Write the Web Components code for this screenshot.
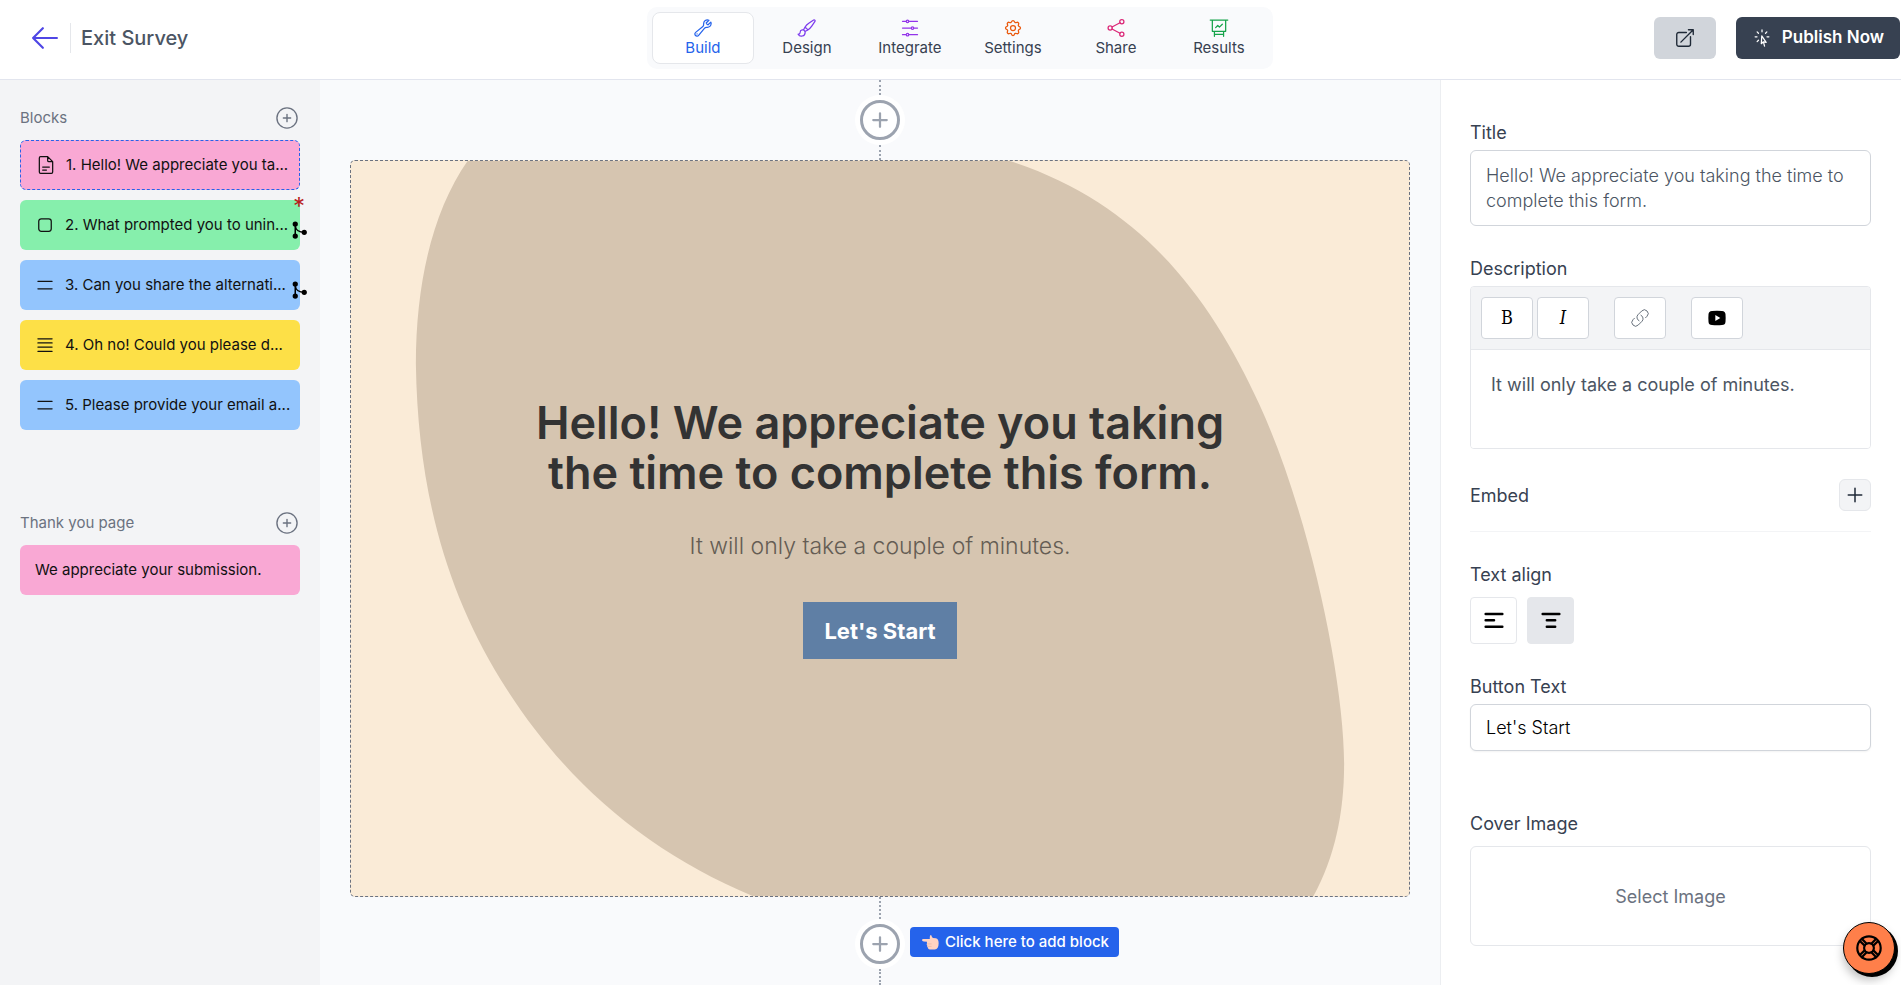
<!DOCTYPE html>
<html lang="en">
<head>
<meta charset="utf-8">
<meta name="viewport" content="width=device-width, initial-scale=1">
<title>Exit Survey</title>
<style>
  body {
    margin: 0;
    font-family: Inter, "Liberation Sans", sans-serif;
    color: #374151;
    background: #f9fafb;
  }
</style>
</head>
<body>
<survey-app></survey-app>

<script>
const icons = {
  back: `<path d="M23 10H1M10 1L1 10l9 9"/>`,
  wrench: `<path d="M21.75 6.75a4.5 4.5 0 0 1-4.884 4.484c-1.076-.091-2.264.071-2.95.904l-7.152 8.684a2.548 2.548 0 1 1-3.586-3.586l8.684-7.152c.833-.686.995-1.874.904-2.95a4.5 4.5 0 0 1 6.336-4.486l-3.276 3.276a3.004 3.004 0 0 0 2.25 2.25l3.276-3.276c.256.565.398 1.192.398 1.852Z"/><path d="M4.867 19.125h.008v.008h-.008v-.008Z"/>`,
  brush: `<path d="M9.53 16.122a3 3 0 0 0-5.78 1.128 2.25 2.25 0 0 1-2.4 2.245 4.5 4.5 0 0 0 8.4-2.245c0-.399-.078-.78-.22-1.128Zm0 0a15.998 15.998 0 0 0 3.388-1.62m-5.043-.025a15.994 15.994 0 0 1 1.622-3.395m3.42 3.42a15.995 15.995 0 0 0 4.764-4.648l3.876-5.814a1.151 1.151 0 0 0-1.597-1.597L14.146 6.32a15.996 15.996 0 0 0-4.649 4.763m3.42 3.42a6.776 6.776 0 0 0-3.42-3.42"/>`,
  sliders: `<path d="M10.5 4H21M10.5 4a1.5 1.5 0 1 1-3 0m3 0a1.5 1.5 0 1 0-3 0M3 4h4.5m3 16H21m-10.5 0a1.5 1.5 0 0 1-3 0m3 0a1.5 1.5 0 0 0-3 0M3 20h4.5m9-8H21m-4.5 0a1.5 1.5 0 0 1-3 0m3 0a1.5 1.5 0 0 0-3 0M3 12h10.5"/>`,
  cog: `<path d="M10.325 4.317c.426-1.756 2.924-1.756 3.35 0a1.724 1.724 0 002.573 1.066c1.543-.94 3.31.826 2.37 2.37a1.724 1.724 0 001.065 2.572c1.756.426 1.756 2.924 0 3.35a1.724 1.724 0 00-1.066 2.573c.94 1.543-.826 3.31-2.37 2.37a1.724 1.724 0 00-2.572 1.065c-.426 1.756-2.924 1.756-3.35 0a1.724 1.724 0 00-2.573-1.066c-1.543.94-3.31-.826-2.37-2.37a1.724 1.724 0 00-1.065-2.572c-1.756-.426-1.756-2.924 0-3.35a1.724 1.724 0 001.066-2.573c-.94-1.543.826-3.31 2.37-2.37.996.608 2.296.07 2.572-1.065z"/><circle cx="12" cy="12" r="3"/>`,
  share: `<circle cx="5" cy="12" r="2.5"/><circle cx="19" cy="4.5" r="2.5"/><circle cx="19" cy="19.5" r="2.5"/><path d="M7.2 10.8l9.6-5.1M7.2 13.2l9.6 5.1"/>`,
  chart: `<path d="M1.5 2.5h21M4 2.5V16h16V2.5M6.5 16v6M17.5 16v6M6.500 19.500h11M8 11.500l2.500-2.500 2 2L16 7.500"/>`,
  external: `<path d="M13.5 6H5.25A2.25 2.25 0 0 0 3 8.25v10.5A2.25 2.25 0 0 0 5.25 21h10.5A2.25 2.25 0 0 0 18 18.75V10.5m-10.5 6L21 3m0 0h-5.25M21 3v5.25"/>`,
  click: `<path d="M15.042 21.672 13.684 16.6m0 0-2.51 2.225.569-9.47 5.227 7.917-3.286-.672ZM12 2.25V4.5m5.834.166-1.591 1.591M20.25 10.5H18M7.757 14.743l-1.59 1.59M6 10.5H3.75m4.007-4.243-1.59-1.59"/>`,
  addCircle: `<circle cx="12" cy="12" r="11"/><path d="M12 8v8M8 12h8"/>`,
  plus: `<path d="M12 3v18M3 12h18"/>`,
  page: `<path d="M14 2H5.5A1.5 1.5 0 0 0 4 3.5v17A1.5 1.5 0 0 0 5.5 22h13a1.5 1.5 0 0 0 1.5-1.5V8zM14 2v4.5A1.5 1.5 0 0 0 15.5 8H20M8 14.5h8M8 18h4.5"/>`,
  box: `<rect x="4.5" y="4.5" width="15" height="15" rx="3"/>`,
  short: `<path d="M3.5 7.500h17M3.5 16.500h17"/>`,
  long: `<path d="M3.5 4.500h17M3.5 9.500h17M3.5 14.500h17M3.5 19.500h17"/>`,
  branch: `<g fill="currentColor"><circle cx="7" cy="4" r="2.5"/><circle cx="7" cy="20" r="2.5"/><circle cx="19" cy="15" r="2.500"/></g><path d="M7 4v16M7 7c1 6 6 8 12 8"/>`,
  link: `<path d="M13.19 8.688a4.5 4.5 0 0 1 1.242 7.244l-4.5 4.5a4.5 4.5 0 0 1-6.364-6.364l1.757-1.757m13.35-.622 1.757-1.757a4.5 4.5 0 0 0-6.364-6.364l-4.5 4.5a4.5 4.5 0 0 0 1.242 7.244"/>`,
  video: `<path fill="currentColor" stroke="none" fill-rule="evenodd" d="M6 3.500Q12 3 18 3.500q4 .2 4.200 4Q22.600 12 22.200 16.500q-.2 3.800-4.200 4Q12 21 6 20.500q-4-.2-4.200-4Q1.400 12 1.800 7.500 2 3.700 6 3.500zM10 8.500v7l6-3.500z"/>`,
  alignLeft: `<path d="M2 3.500h20M2 11h10M2 19h20"/>`,
  alignCenter: `<path d="M2 3.500h20M7 11h10M7 19h10"/>`,
  buoy: `<circle cx="12" cy="12" r="10.8"/><circle cx="12" cy="12" r="4.5"/><path d="M8 9.8L3.600 5.600M9.800 8L5.600 3.600M14.200 8l4.200-4.400M16 9.800l4.400-4.200M16 14.200l4.400 4.200M14.200 16l4.200 4.400M9.800 16l-4.200 4.400M8 14.200l-4.400 4.200"/>`,
  hand: `<path fill="#ffd3c2" stroke="none" d="M2.500 10.500Q0 10.200 0 8.500T2.500 7L11 7Q10.500 3.500 12 1.500q1-.6 1.400.8.4 2 2.100 3.200L19.500 6q4 .5 4 7 0 8-5.500 9H11q-2.800-.2-2.500-2.500-1.800-1-1-3-1.500-1.300-.6-3L7 11z"/><path stroke="#eab5a2" stroke-width="1" d="M8 14h5M8.500 17.500H13"/>`,
};

// <ui-icon name="..."> takes its size from --size and its line from --stroke
class UiIcon extends HTMLElement {
  connectedCallback() {
    const name = this.getAttribute("name");
    const box = name === "back" ? "0 0 24 20" : "0 0 24 24";
    this.attachShadow({ mode: "open" }).innerHTML = /*html*/ `
<style>
  :host { display: inline-flex; width: var(--size, 20px); height: var(--size, 20px); flex: none; }
  svg { width: 100%; height: 100%; fill: none; stroke: currentColor; stroke-width: var(--stroke, 1.5); stroke-linecap: round; stroke-linejoin: round; }
</style>
<svg viewBox="${box}" aria-hidden="true">${icons[name]}</svg>`;
  }
}
customElements.define("ui-icon", UiIcon);

class NavTab extends HTMLElement {
  connectedCallback() {
    this.attachShadow({ mode: "open" }).innerHTML = /*html*/ `
<style>
  :host { display: block; }
  a {
    display: flex;
    flex-direction: column;
    align-items: center;
    padding: 5px;
    border: 1px solid transparent;
    border-radius: 8px;
    color: inherit;
    font-size: 15px;
    line-height: 20px;
    text-decoration: none;
  }
  :host([active]) a { background: #fff; border-color: #e5e7eb; color: #2563eb; }
  ui-icon { color: var(--tint); }
</style>
<a href="#"><ui-icon name="${this.getAttribute("icon")}"></ui-icon><slot></slot></a>`;
  }
}
customElements.define("nav-tab", NavTab);

class AppHeader extends HTMLElement {
  connectedCallback() {
    this.attachShadow({ mode: "open" }).innerHTML = /*html*/ `
<style>
  :host {
    display: flex;
    align-items: center;
    justify-content: space-between;
    box-sizing: border-box;
    height: 80px;
    padding: 0 1px 4px 0;
    background: #fff;
    border-bottom: 1px solid #e2e5ee;
  }
  .title { display: flex; align-items: center; box-sizing: border-box; width: 266px; padding-left: 32px; }
  .title a { display: flex; color: #4f46e5; --size: 26px; --stroke: 2; }
  h1 {
    margin: 0 0 0 12px;
    padding-left: 10px;
    border-left: 1px solid #e5e7eb;
    color: #4b5563;
    font-size: 20px;
    font-weight: 500;
    line-height: 30px;
  }
  nav {
    display: grid;
    grid-template-columns: 102px repeat(5, 1fr);
    gap: 3px;
    box-sizing: border-box;
    width: 626px;
    padding: 5px 4px 5px 5px;
    border-radius: 10px;
    background: #f9fafc;
  }
  .actions { display: flex; gap: 20px; }
  button {
    display: flex;
    align-items: center;
    height: 42px;
    border: 0;
    border-radius: 6px;
    font: 600 17px/25px Inter, "Liberation Sans", sans-serif;
  }
  .preview { padding: 0 20px; background: #d1d5db; color: #1f2937; --size: 22px; }
  .publish { gap: 10px; padding: 0 16px; background: #374151; color: #fff; }
</style>
<div class="title">
  <a href="#" aria-label="Back"><ui-icon name="back"></ui-icon></a>
  <h1>Exit Survey</h1>
</div>
<nav>
  <nav-tab icon="wrench" style="--tint: #2563eb" active>Build</nav-tab>
  <nav-tab icon="brush" style="--tint: #7c3aed">Design</nav-tab>
  <nav-tab icon="sliders" style="--tint: #9333ea">Integrate</nav-tab>
  <nav-tab icon="cog" style="--tint: #ea580c">Settings</nav-tab>
  <nav-tab icon="share" style="--tint: #db2777">Share</nav-tab>
  <nav-tab icon="chart" style="--tint: #16a34a">Results</nav-tab>
</nav>
<div class="actions">
  <button class="preview" aria-label="Preview"><ui-icon name="external"></ui-icon></button>
  <button class="publish"><ui-icon name="click"></ui-icon>Publish Now</button>
</div>`;
  }
}
customElements.define("app-header", AppHeader);

class BlockItem extends HTMLElement {
  connectedCallback() {
    const icon = this.getAttribute("icon");
    this.attachShadow({ mode: "open" }).innerHTML = /*html*/ `
<style>
  :host { display: block; position: relative; color: #111; }
  button {
    display: flex;
    align-items: center;
    gap: 10px;
    width: 100%;
    height: 50px;
    padding: 0 0 0 15px;
    border: 0;
    border-radius: 6px;
    background: var(--fill);
    color: inherit;
    font: 15px/20px Inter, "Liberation Sans", sans-serif;
    white-space: nowrap;
  }
  :host([active]) button { border: 1px dashed #2563eb; }
  .required { position: absolute; top: -5px; right: -5px; color: #b91c1c; font-size: 24px; line-height: 24px; }
  .logic { position: absolute; top: 21px; right: -8px; color: #000; --size: 18px; --stroke: 2; }
</style>
<button>${icon ? `<ui-icon name="${icon}"></ui-icon>` : ""}<slot></slot></button>
${this.hasAttribute("required") ? `<span class="required">*</span>` : ""}
${this.hasAttribute("logic") ? `<ui-icon class="logic" name="branch"></ui-icon>` : ""}`;
  }
}
customElements.define("block-item", BlockItem);

class BlockGroup extends HTMLElement {
  connectedCallback() {
    this.attachShadow({ mode: "open" }).innerHTML = /*html*/ `
<style>
  :host { display: flex; flex-direction: column; gap: 10px; }
  header { display: flex; align-items: center; justify-content: space-between; height: 25px; padding-right: 2px; }
  h2 { margin: 0; color: #6b7280; font-size: 15px; font-weight: 400; line-height: 25px; }
  button { display: flex; padding: 0; border: 0; background: none; color: #6b7280; --size: 22px; }
</style>
<header>
  <h2>${this.getAttribute("heading")}</h2>
  <button aria-label="Add to ${this.getAttribute("heading")}"><ui-icon name="addCircle"></ui-icon></button>
</header>
<slot></slot>`;
  }
}
customElements.define("block-group", BlockGroup);

class BlockSidebar extends HTMLElement {
  connectedCallback() {
    this.attachShadow({ mode: "open" }).innerHTML = /*html*/ `
<style>
  :host { display: flex; flex-direction: column; gap: 80px; box-sizing: border-box; padding: 25px 20px; background: #f3f4f6; }
</style>
<block-group heading="Blocks">
  <block-item icon="page" style="--fill: #f9a8d4" active>1. Hello! We appreciate you ta...</block-item>
  <block-item icon="box" style="--fill: #86efac" required logic>2. What prompted you to unin...</block-item>
  <block-item icon="short" style="--fill: #93c5fd" logic>3. Can you share the alternati...</block-item>
  <block-item icon="long" style="--fill: #fde047">4. Oh no! Could you please d...</block-item>
  <block-item icon="short" style="--fill: #93c5fd">5. Please provide your email a...</block-item>
</block-group>
<block-group heading="Thank you page">
  <block-item style="--fill: #f9a8d4">We appreciate your submission.</block-item>
</block-group>`;
  }
}
customElements.define("block-sidebar", BlockSidebar);

// dotted line with an add button on it, the slot takes a tooltip
class AddConnector extends HTMLElement {
  connectedCallback() {
    this.attachShadow({ mode: "open" }).innerHTML = /*html*/ `
<style>
  :host { display: flex; flex-direction: column; align-items: center; }
  i { height: var(--before, 15px); border-left: 2px dotted #9ca3af; }
  i:last-child { height: var(--after, 15px); }
  div { position: relative; border-radius: 50%; background: #fff; padding: 5px; }
  button {
    display: flex;
    align-items: center;
    justify-content: center;
    box-sizing: border-box;
    width: 40px;
    height: 40px;
    padding: 0;
    border: 3px solid #9ca3af;
    border-radius: 50%;
    background: #fff;
    color: #9ca3af;
    --size: 18px;
    --stroke: 3;
  }
  ::slotted(span) {
    position: absolute;
    top: 8px;
    left: 100%;
    display: flex;
    align-items: center;
    gap: 6px;
    margin-left: 5px;
    padding: 0 10px 0 12px;
    border-radius: 4px;
    background: #2563eb;
    color: #fff;
    font-size: 15px;
    font-weight: 500;
    line-height: 30px;
    white-space: nowrap;
  }
</style>
<i></i>
<div><button aria-label="Add block"><ui-icon name="plus"></ui-icon></button><slot></slot></div>
<i></i>`;
  }
}
customElements.define("add-connector", AddConnector);

class WelcomeCard extends HTMLElement {
  connectedCallback() {
    this.attachShadow({ mode: "open" }).innerHTML = /*html*/ `
<style>
  :host {
    display: flex;
    flex-direction: column;
    align-items: center;
    justify-content: center;
    position: relative;
    overflow: hidden;
    border: 1px dashed #6b7280;
    border-radius: 5px;
    background: #faebd7;
    text-align: center;
  }
  .shape { position: absolute; inset: 0; width: 100%; height: 100%; }
  h2, p, button { position: relative; }
  h2 { max-width: 740px; margin: 0; color: #333; font-size: 45px; font-weight: 600; line-height: 50px; }
  p { margin: 30px 0 38px; color: #655d54; font-size: 23px; font-weight: 300; line-height: 36px; }
  button {
    height: 57px;
    padding: 0 21px;
    border: 0;
    background: #5f7fa5;
    color: #fff;
    font: 700 22px/32px Inter, "Liberation Sans", sans-serif;
  }
</style>
<svg class="shape" viewBox="0 0 1060 737" preserveAspectRatio="xMidYMid slice" aria-hidden="true">
  <path fill="#d6c5b0" d="M117 0C82 50 65 122 65 204C67 330 95 430 150 520C215 625 300 695 408 739H963C985 700 995 655 995 604C995 520 960 353 910 244C860 135 790 42 659 0z"/>
</svg>
<h2>Hello! We appreciate you taking the time to complete this form.</h2>
<p>It will only take a couple of minutes.</p>
<button>Let's Start</button>`;
  }
}
customElements.define("welcome-card", WelcomeCard);

class SurveyCanvas extends HTMLElement {
  connectedCallback() {
    this.attachShadow({ mode: "open" }).innerHTML = /*html*/ `
<style>
  :host { display: flex; flex-direction: column; box-sizing: border-box; padding: 0 30px; background: #f9fafc; }
  welcome-card { flex: 1; }
  .last { --before: 22px; --after: 16px; }
  .tip ui-icon { --size: 17px; }
</style>
<add-connector></add-connector>
<welcome-card></welcome-card>
<add-connector class="last"><span class="tip"><ui-icon name="hand"></ui-icon>Click here to add block</span></add-connector>`;
  }
}
customElements.define("survey-canvas", SurveyCanvas);

class BlockSettings extends HTMLElement {
  connectedCallback() {
    this.attachShadow({ mode: "open" }).innerHTML = /*html*/ `
<style>
  :host {
    display: flex;
    flex-direction: column;
    gap: 30px;
    box-sizing: border-box;
    padding: 40px 30px 40px 29px;
    border-left: 1px solid #eceef1;
    background: #fff;
    font-size: 18px;
    line-height: 25px;
  }
  .field { display: flex; flex-direction: column; gap: 5px; }
  .wide { gap: 10px; }
  .cover { margin-top: 30px; }
  input, textarea, button { box-sizing: border-box; margin: 0; border: 1px solid #d1d5db; background: #fff; font: inherit; }
  textarea { display: block; width: 100%; resize: none; overflow: hidden; color: #4b5563; font-weight: 300; outline: 0; }
  .title { height: 76px; padding: 12px 15px; border-radius: 6px; }
  input { width: 100%; height: 47px; padding: 0 15px; border-radius: 6px; color: #000; font-weight: 300; box-shadow: 0 1px 2px rgba(0, 0, 0, 0.05); }
  .editor { border: 1px solid #e5e7eb; border-radius: 4px; overflow: hidden; }
  .toolbar { display: flex; gap: 25px; padding: 10px; background: #f3f4f6; border-bottom: 1px solid #e5e7eb; }
  .toolbar div { display: flex; gap: 4px; }
  .toolbar button { width: 52px; height: 42px; border-radius: 4px; }
  .editor textarea { height: 98px; padding: 22px 20px; border: 0; font-weight: 400; }
  button { display: flex; align-items: center; justify-content: center; padding: 0; color: #000; }
  .toolbar .glyph { font: 18px/24px "DejaVu Serif Condensed", "DejaVu Serif", serif; }
  .toolbar .italic { font-style: italic; }
  .toolbar .link { color: #4b5563; --stroke: 1; }
  .embed { display: flex; align-items: center; justify-content: space-between; padding-bottom: 20px; border-bottom: 1px solid #f3f4f6; }
  .embed button { width: 32px; height: 32px; border-color: #e5e7eb; border-radius: 6px; background: #f3f4f6; color: #1f2937; --size: 18px; --stroke: 2; }
  .align { display: flex; gap: 10px; --stroke: 3; }
  .align button { width: 47px; height: 47px; border-color: #e5e7eb; border-radius: 4px; }
  .align .on { background: #e5e7eb; }
  .image { height: 100px; border-color: #e5e7eb; border-radius: 6px; color: #6b7280; }
</style>
<div class="field">
  <label for="title">Title</label>
  <textarea class="title" id="title">Hello! We appreciate you taking the time to complete this form.</textarea>
</div>
<div class="field">
  <label for="description">Description</label>
  <div class="editor">
    <div class="toolbar">
      <div>
        <button class="glyph" aria-label="Bold">B</button>
        <button class="glyph italic" aria-label="Italic">I</button>
      </div>
      <button class="link" aria-label="Link"><ui-icon name="link"></ui-icon></button>
      <button aria-label="Video"><ui-icon name="video"></ui-icon></button>
    </div>
    <textarea id="description">It will only take a couple of minutes.</textarea>
  </div>
</div>
<div class="embed">
  <span>Embed</span>
  <button aria-label="Add embed"><ui-icon name="plus"></ui-icon></button>
</div>
<div class="field wide">
  <span>Text align</span>
  <div class="align">
    <button aria-label="Left"><ui-icon name="alignLeft"></ui-icon></button>
    <button class="on" aria-label="Center"><ui-icon name="alignCenter"></ui-icon></button>
  </div>
</div>
<div class="field">
  <label for="button-text">Button Text</label>
  <input id="button-text" type="text" value="Let's Start">
</div>
<div class="field wide cover">
  <label for="cover">Cover Image</label>
  <button class="image" id="cover">Select Image</button>
</div>`;
  }
}
customElements.define("block-settings", BlockSettings);

class HelpButton extends HTMLElement {
  connectedCallback() {
    this.attachShadow({ mode: "open" }).innerHTML = /*html*/ `
<style>
  :host { position: fixed; right: 6px; bottom: 11px; }
  button {
    display: flex;
    align-items: center;
    justify-content: center;
    box-sizing: border-box;
    width: 52px;
    height: 52px;
    padding: 0;
    border: 1px solid #000;
    border-radius: 50%;
    background: #ff7f4a;
    color: #000;
    box-shadow: 3px 3px 0 #000, 0 6px 10px rgba(0, 0, 0, 0.25);
    --size: 26px;
    --stroke: 2;
  }
</style>
<button aria-label="Help"><ui-icon name="buoy"></ui-icon></button>`;
  }
}
customElements.define("help-button", HelpButton);

class SurveyApp extends HTMLElement {
  connectedCallback() {
    this.attachShadow({ mode: "open" }).innerHTML = /*html*/ `
<style>
  :host { display: flex; flex-direction: column; height: 100vh; overflow: hidden; }
  main { display: grid; grid-template-columns: 320px 1fr 461px; flex: 1; min-height: 0; }
  main > * { min-height: 0; overflow: hidden; }
</style>
<app-header></app-header>
<main>
  <block-sidebar></block-sidebar>
  <survey-canvas></survey-canvas>
  <block-settings></block-settings>
</main>
<help-button></help-button>`;
  }
}
customElements.define("survey-app", SurveyApp);
</script>
</body>
</html>
